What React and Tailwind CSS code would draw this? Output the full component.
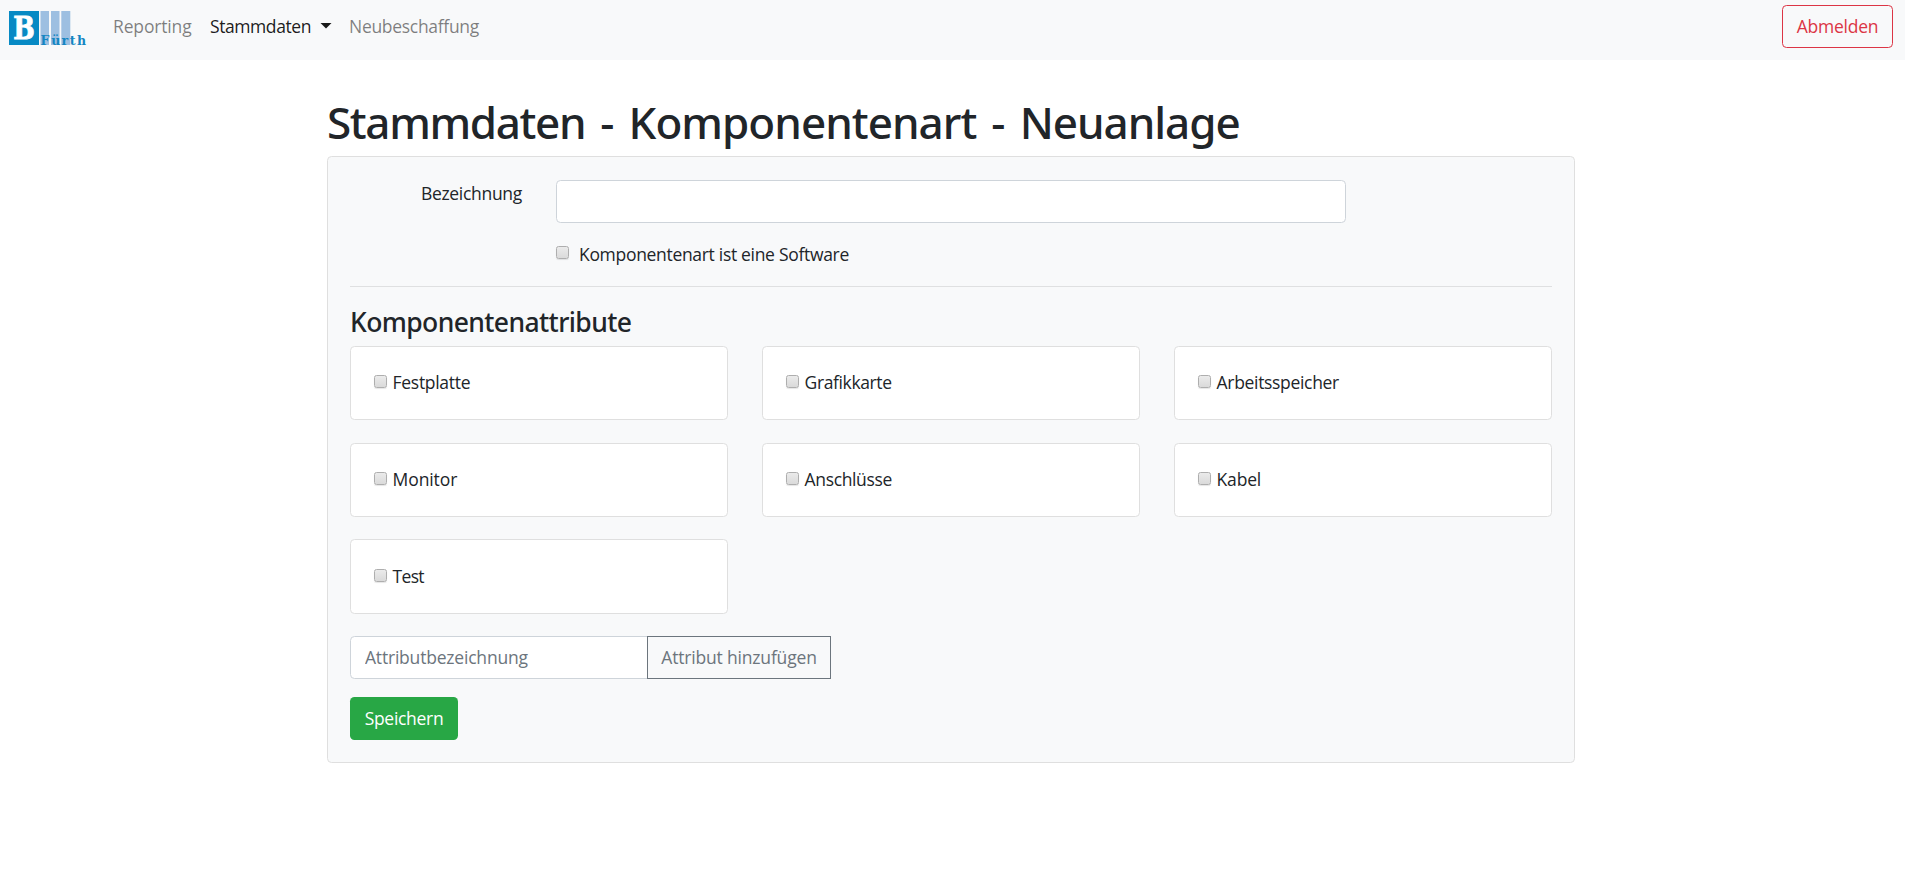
const ATTRIBUTES = [
  { name: 'Festplatte', tracking: 'tracking-[-0.3px]' },
  { name: 'Grafikkarte', tracking: 'tracking-[-0.38px]' },
  { name: 'Arbeitsspeicher', tracking: 'tracking-[-0.32px]' },
  { name: 'Monitor', tracking: 'tracking-[-0.1px]' },
  { name: 'Anschlüsse', tracking: 'tracking-[-0.36px]' },
  { name: 'Kabel', tracking: 'tracking-[-0.2px]' },
  { name: 'Test', tracking: 'tracking-[-0.7px]' },
];

function Logo() {
  return (
    <svg width="78" height="36" viewBox="0 0 78 36" className="shrink-0">
      <rect x="0" y="1" width="30" height="34" fill="#078ac4" />
      <rect x="31.5" y="1" width="8.5" height="34" fill="#9dbfe1" />
      <rect x="42" y="1" width="8.5" height="34" fill="#9dbfe1" />
      <rect x="52.3" y="1" width="9" height="34" fill="#9dbfe1" />
      <text x="4.2" y="29" textLength="21.5" lengthAdjust="spacingAndGlyphs" fill="#ffffff" stroke="#ffffff" strokeWidth="0.9" className="font-['DejaVu_Serif',serif] text-[31px] font-bold">B</text>
      <text x="31.5 42.3 52.6 60.8 68" y="34.5" fill="#1486c2" className="font-['DejaVu_Serif',serif] text-[12.5px] font-bold">Fürth</text>
    </svg>
  );
}

function Checkbox({ className = '' }) {
  return (
    <input
      type="checkbox"
      className={`size-[13px] shrink-0 appearance-none rounded-[2.5px] border border-[#aeaeae] bg-linear-to-b from-[#ebebeb] to-[#dadada] shadow-[0_1px_1px_rgba(0,0,0,0.1)] ${className}`}
    />
  );
}

export default function App() {
  return (
    <div className="min-h-screen bg-white font-['Open_Sans',sans-serif] text-[17.5px] leading-[27px] text-[#212529]">
      <nav className="flex h-[60px] items-start bg-[#f8f9fa] pr-3 pl-[9px] whitespace-nowrap">
        <a href="#" className="mt-[10px]"><Logo /></a>
        <div className="ml-[26px] flex pt-[13px]">
          <a href="#" className="w-[97px] tracking-[-0.15px] text-black/50">Reporting</a>
          <a href="#" className="flex w-[139px] text-black/90">
            <span className="w-[101px] tracking-[-0.42px]">Stammdaten</span>
            <svg width="12" height="6" viewBox="0 0 12 6" className="mt-[10px] ml-[9px]"><path d="M0.5 0h11L6 5.5z" fill="currentColor" /></svg>
          </a>
          <a href="#" className="tracking-[-0.3px] text-black/50">Neubeschaffung</a>
        </div>
        <button className="mt-[5px] ml-auto h-[43px] w-[111px] rounded-[4.5px] border border-[#dc3545] pb-px tracking-[-0.25px] text-[#dc3545]">Abmelden</button>
      </nav>

      <main className="ml-[327px] w-[1248px] pt-[36px]">
        <h1 className="h-[60px] font-['Noto_Sans',sans-serif] text-[44px] leading-[53px] font-medium tracking-[-0.6px] [word-spacing:4.1px] whitespace-nowrap">
          <span className="tracking-[-1.35px]">Stammdaten</span> - <span className="tracking-[-0.97px]">Komponentenart</span> - <span className="tracking-[-1.05px]">Neuanlage</span>
        </h1>
        <form className="h-[607px] rounded-[4.5px] border border-[#dfdfdf] bg-[#f8f9fa] px-[22px] pt-[23px]">
          <div className="flex">
            <label className="w-[206px] pr-[34px] text-right tracking-[-0.3px]">Bezeichnung</label>
            <input type="text" className="h-[43px] w-[790px] rounded-[4.5px] border border-[#ced4da] bg-white px-[14px]" />
          </div>
          <div className="mt-[18px] flex h-[27px] pl-[206px]">
            <Checkbox className="mt-[5px]" />
            <label className="ml-[10px] tracking-[-0.31px]">Komponentenart ist eine Software</label>
          </div>
          <hr className="mt-[18px] border-t border-[#dfe0e1]" />
          <h2 className="mt-[19px] h-[40px] font-['Noto_Sans',sans-serif] text-[26.5px] leading-[32px] font-medium tracking-[-0.6px]">Komponentenattribute</h2>
          <div className="grid grid-cols-[378px_378px_378px] justify-between gap-y-[22.4px]">
            {ATTRIBUTES.map(({ name, tracking }) => (
              <div key={name} className="flex h-[74.3px] rounded-[4.5px] border border-[#dfdfdf] bg-white pt-[22.2px] pl-[23px]">
                <Checkbox className="mt-[6px]" />
                <label className={`ml-[5.6px] ${tracking}`}>{name}</label>
              </div>
            ))}
          </div>
          <div className="mt-[22.5px] flex">
            <input
              type="text"
              placeholder="Attributbezeichnung"
              className="h-[43px] w-[298px] rounded-l-[4.5px] border border-[#ced4da] bg-white px-[14px] pb-px tracking-[-0.2px] placeholder:text-[#6c757d]"
            />
            <button type="button" className="-ml-px h-[43px] w-[184px] border border-[#6c757d] pb-px tracking-[-0.18px] text-[#6c757d]">Attribut hinzufügen</button>
          </div>
          <button type="button" className="mt-[18px] h-[43px] w-[108px] rounded-[4.5px] bg-[#28a745] pb-px tracking-[-0.3px] text-white">Speichern</button>
        </form>
      </main>
    </div>
  );
}
